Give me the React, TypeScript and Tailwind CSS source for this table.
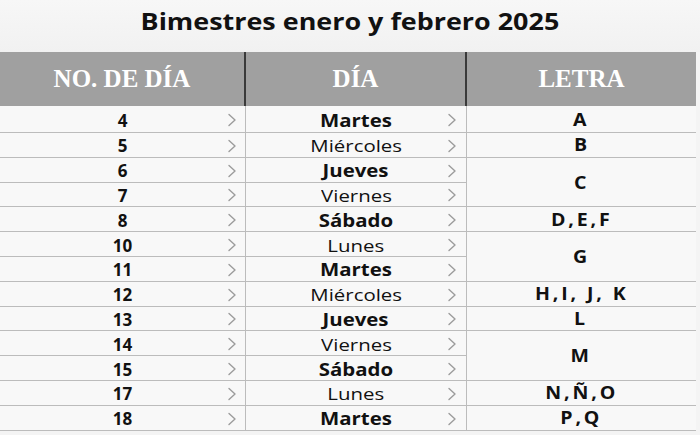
import React from 'react';

type Row = { num: string; day: string; letter?: string; span?: boolean };

const rows: Row[] = [
  { num: '4', day: 'Martes', letter: 'A' },
  { num: '5', day: 'Miércoles', letter: 'B' },
  { num: '6', day: 'Jueves', letter: 'C', span: true },
  { num: '7', day: 'Viernes' },
  { num: '8', day: 'Sábado', letter: 'D,E,F' },
  { num: '10', day: 'Lunes', letter: 'G', span: true },
  { num: '11', day: 'Martes' },
  { num: '12', day: 'Miércoles', letter: 'H,I, J, K' },
  { num: '13', day: 'Jueves', letter: 'L' },
  { num: '14', day: 'Viernes', letter: 'M', span: true },
  { num: '15', day: 'Sábado' },
  { num: '17', day: 'Lunes', letter: 'N,Ñ,O' },
  { num: '18', day: 'Martes', letter: 'P,Q' },
];

const boldDays = ['Martes', 'Jueves', 'Sábado'];

const Chevron: React.FC = () => (
  <svg width="10" height="14" viewBox="0 0 10 14" className="shrink-0">
    <polyline points="2,1.5 8,7 2,12.5" fill="none" stroke="#9c9c9c" strokeWidth="1.4" strokeLinecap="round" strokeLinejoin="round" />
  </svg>
);

const App: React.FC = () => {
  return (
    <div
      className="w-[700px] h-[435px] overflow-hidden bg-[#f4f4f4] text-[#111]"
      style={{ fontFamily: '"Open Sans", "Liberation Sans", sans-serif' }}
    >
      <div className="h-[52px] flex items-center justify-center pb-[10px] bg-gradient-to-b from-[#f7f7f7] to-[#f1f1f1]">
        <span className="inline-block scale-x-[1.17] text-[23px] font-bold leading-none">
          Bimestres enero y febrero 2025
        </span>
      </div>

      <div className="w-[696px]">
        <div
          className="grid grid-cols-[246px_221px_229px] h-[54px] bg-[#a0a0a0] text-white text-[25px] font-bold"
          style={{ fontFamily: '"Liberation Serif", serif' }}
        >
          <div className="flex items-center justify-center border-r-2 border-[#3a3a3a]">NO. DE DÍA</div>
          <div className="flex items-center justify-center border-r-2 border-[#3a3a3a]">DÍA</div>
          <div className="flex items-center justify-center">LETRA</div>
        </div>

        <div className="grid grid-cols-[246px_221px_229px] grid-rows-[27px_repeat(12,24.8px)] bg-[#f8f8f8]">
          {rows.map((r) => (
            <React.Fragment key={r.num}>
              <div className="flex items-center pt-[2px] pl-[18px] pr-[8px] border-b border-r border-[#bcbcbc]">
                <span className="flex-1 text-center text-[17px] font-bold leading-none">{r.num}</span>
                <Chevron />
              </div>
              <div className="flex items-center pt-[2px] pl-[19px] pr-[9px] border-b border-r border-[#bcbcbc]">
                <span className="flex-1 text-center leading-none">
                  <span
                    className={`inline-block scale-x-[1.2] text-[17px] ${
                      boldDays.includes(r.day) ? 'font-bold' : 'font-normal'
                    }`}
                  >
                    {r.day}
                  </span>
                </span>
                <Chevron />
              </div>
              {r.letter && (
                <div
                  className={`flex items-center justify-center border-b border-[#bcbcbc] ${
                    r.span ? 'row-span-2' : ''
                  }`}
                >
                  <span className="inline-block scale-x-[1.15] text-[17px] font-bold tracking-[2.5px] leading-none">
                    {r.letter}
                  </span>
                </div>
              )}
            </React.Fragment>
          ))}
        </div>
      </div>
    </div>
  );
};

export default App;
